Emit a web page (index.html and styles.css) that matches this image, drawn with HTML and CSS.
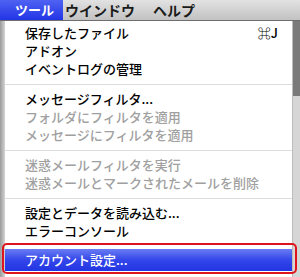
FILE: index.html
```html
<!DOCTYPE html>
<html lang="ja">
<head>
  <meta charset="UTF-8">
  <meta name="viewport" content="width=device-width, initial-scale=1.0">
  <title>ツールメニュー</title>
  <link rel="stylesheet" href="styles.css">
</head>
<body>

<div class="menubar">
  <div class="menubar-item ativo">ツール</div>
  <div class="menubar-item">ウインドウ</div>
  <div class="menubar-item">ヘルプ</div>
</div>

<div class="tela">
  <div class="borda-esq"></div>

  <div class="menu">
    <div class="item"><span>保存したファイル</span><span class="atalho">⌘J</span></div>
    <div class="item">アドオン</div>
    <div class="item">イベントログの管理</div>
    <div class="separador"></div>
    <div class="item">メッセージフィルタ...</div>
    <div class="item desativado">フォルダにフィルタを適用</div>
    <div class="item desativado">メッセージにフィルタを適用</div>
    <div class="separador"></div>
    <div class="item desativado">迷惑メールフィルタを実行</div>
    <div class="item desativado">迷惑メールとマークされたメールを削除</div>
    <div class="separador"></div>
    <div class="item">設定とデータを読み込む...</div>
    <div class="item">エラーコンソール</div>
    <div class="item selecionado">アカウント設定...</div>
  </div>

  <div class="rolagem"><div class="rolagem-topo"></div></div>

  <div class="destaque"></div>
</div>

</body>
</html>
```

FILE: styles.css
```css
body {
  margin: 0;
  width: 300px;
  height: 277px;
  overflow: hidden;
  background-color: #ffffff;
  font-family: "Noto Sans CJK JP", "Noto Sans", sans-serif;
  font-size: 13px;
  font-weight: 500;
}

.menubar {
  display: flex;
  height: 20px;
  background: linear-gradient(#e2e2e2, #c2c2c2);
  border-bottom: 1px solid #6e6e6e;
}

.menubar-item {
  padding: 0 16px 0 2px;
  line-height: 20px;
  font-size: 14px;
  font-weight: bold;
  color: #1a1a1a;
}

.menubar-item.ativo {
  color: #ffffff;
  background: linear-gradient(#4f62f2, #2235e6);
  padding: 0 9px 0 15px;
  font-size: 13px;
}

.tela {
  position: relative;
  display: flex;
  height: 256px;
}

.borda-esq {
  width: 5px;
  background: linear-gradient(90deg, #9a9a9a, #d4d4d4);
}

.menu {
  flex: 1;
  padding-top: 3px;
  background-color: #ffffff;
}

.item {
  display: flex;
  justify-content: space-between;
  height: 18px;
  line-height: 18px;
  padding: 0 10px 0 20px;
  color: #000000;
}

.atalho {
  padding-right: 4px;
}

.desativado {
  color: #a0a0a0;
}

.separador {
  height: 1px;
  margin: 6px 0 5px 0;
  background-color: #dcdcdc;
}

.selecionado {
  margin-top: 9px;
  height: 22px;
  line-height: 22px;
  color: #ffffff;
  background: linear-gradient(#6a7cf4, #3346ea 50%, #2335e2);
}

.rolagem {
  width: 7px;
  background-color: #d6d6d6;
  border-left: 1px solid #bcbcbc;
}

.rolagem-topo {
  height: 75px;
  background-color: #7a7a7a;
}

.destaque {
  position: absolute;
  left: 2px;
  top: 222px;
  width: 291px;
  height: 27px;
  border: 2px solid #e0141e;
  border-radius: 5px;
}
```
